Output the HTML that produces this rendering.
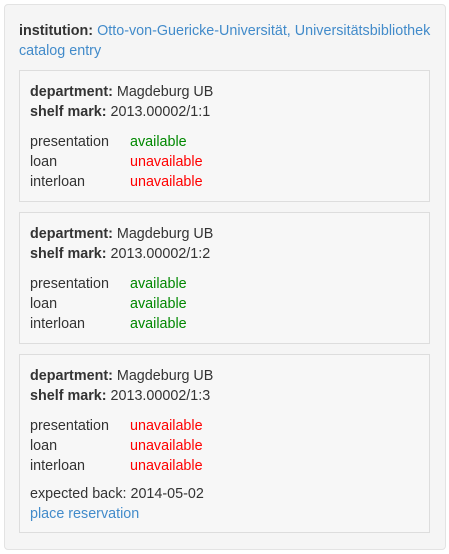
<!DOCTYPE html>
<html><head><style>
*{box-sizing:border-box;margin:0;padding:0}
body{width:449px;height:554px;background:#fff;font-family:"Liberation Sans",sans-serif;font-size:14.35px;line-height:20px;color:#333}
.outer{position:absolute;left:4px;top:4px;width:442px;height:546px;background:#f5f5f5;border:1px solid #e3e3e3;border-radius:4px;padding:16px 14px}
a{color:#428bca;text-decoration:none}
.box{position:absolute;left:14px;width:411px;background:#f7f7f7;border:1px solid #ddd;padding:11px 10px 9px}
.row{display:flex}.row span:first-child{width:100px}
.g{color:#080}.r{color:#f00}
</style></head><body>
<div class="outer">
<div><b>institution:</b> <a>Otto-von-Guericke-Universität, Universitätsbibliothek</a><br><a>catalog entry</a></div>
<div class="box" style="top:65px;height:132px">
<div><b>department:</b> Magdeburg UB</div><div><b>shelf mark:</b> 2013.00002/1:1</div>
<div style="height:10px"></div>
<div class="row"><span>presentation</span><span class="g">available</span></div>
<div class="row"><span>loan</span><span class="r">unavailable</span></div>
<div class="row"><span>interloan</span><span class="r">unavailable</span></div>
</div>
<div class="box" style="top:207px;height:132px">
<div><b>department:</b> Magdeburg UB</div><div><b>shelf mark:</b> 2013.00002/1:2</div>
<div style="height:10px"></div>
<div class="row"><span>presentation</span><span class="g">available</span></div>
<div class="row"><span>loan</span><span class="g">available</span></div>
<div class="row"><span>interloan</span><span class="g">available</span></div>
</div>
<div class="box" style="top:349px;height:179px">
<div><b>department:</b> Magdeburg UB</div><div><b>shelf mark:</b> 2013.00002/1:3</div>
<div style="height:10px"></div>
<div class="row"><span>presentation</span><span class="r">unavailable</span></div>
<div class="row"><span>loan</span><span class="r">unavailable</span></div>
<div class="row"><span>interloan</span><span class="r">unavailable</span></div>
<div style="height:8px"></div>
<div>expected back: 2014-05-02</div>
<div><a>place reservation</a></div>
</div>
</div>
</body></html>
